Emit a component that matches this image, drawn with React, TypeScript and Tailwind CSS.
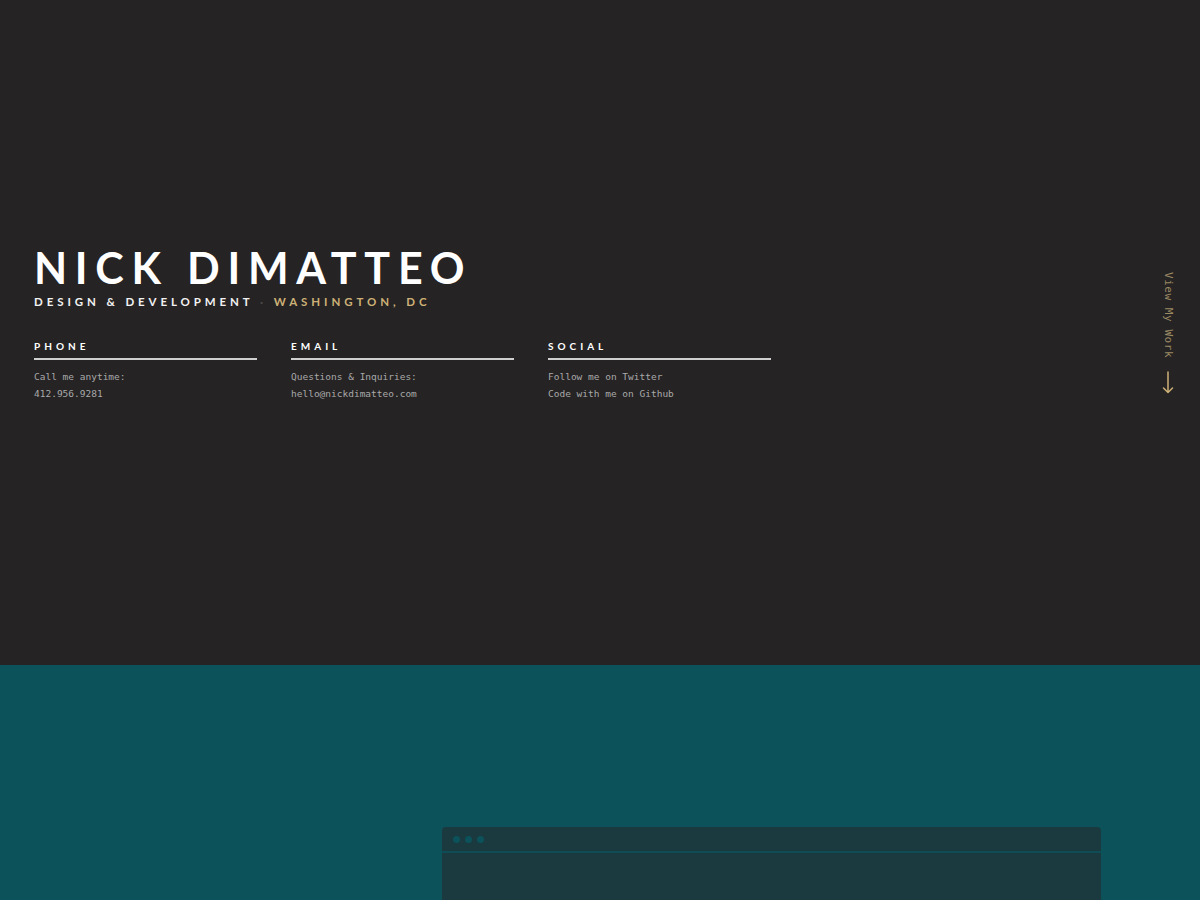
interface ContactColumn {
  title: string
  lines: string[]
}

const columns: ContactColumn[] = [
  { title: 'Phone', lines: ['Call me anytime:', '412.956.9281'] },
  { title: 'Email', lines: ['Questions & Inquiries:', 'hello@nickdimatteo.com'] },
  { title: 'Social', lines: ['Follow me on Twitter', 'Code with me on Github'] },
]

const sans = "font-['Lato','Noto_Sans',sans-serif]"
const mono = "font-['DejaVu_Sans_Mono','Liberation_Mono',monospace]"

export default function App() {
  return (
    <div className="min-h-[900px] bg-[#0b525b]">
      <section className="relative h-[665px] bg-[#252324] px-[34px] pt-[246px]">
        <h1 className={`${sans} text-[43px] font-bold leading-[43px] tracking-[0.18em] text-white`}>
          NICK DIMATTEO
        </h1>
        <p className={`${sans} mt-[4px] text-[11.5px] font-bold tracking-[0.34em] text-[#f2f2f2]`}>
          DESIGN &amp; DEVELOPMENT <span className="text-[#4a4748]">·</span>{' '}
          <span className="text-[#cdb176]">WASHINGTON, DC</span>
        </p>

        <div className="mt-[30px] flex gap-[34px]">
          {columns.map((col: ContactColumn) => (
            <div key={col.title} className="w-[223px]">
              <h3
                className={`${sans} text-[10px] font-bold uppercase leading-[12px] tracking-[0.4em] text-white`}
              >
                {col.title}
              </h3>
              <div className="mt-[6px] h-[2px] bg-[#cfcfcf]" />
              <div className={`${mono} mt-[8px] text-[9.5px] leading-[17px] text-[#a9a9a9]`}>
                {col.lines.map((line: string) => (
                  <div key={line}>{line}</div>
                ))}
              </div>
            </div>
          ))}
        </div>

        <div className="absolute right-[24px] top-[272px] flex flex-col items-center">
          <span className={`${mono} text-[11px] tracking-[0.05em] text-[#9c8a63] [writing-mode:vertical-rl]`}>
            View My Work
          </span>
          <svg className="mt-[13px]" width="12" height="23" viewBox="0 0 12 23" fill="none">
            <path d="M6 1V21.5M1.5 17L6 21.5L10.5 17" stroke="#cdb176" strokeWidth="1.5" strokeLinecap="round" strokeLinejoin="round" />
          </svg>
        </div>
      </section>

      <section className="flex h-[235px] justify-end bg-[#0b525b] pr-[99px] pt-[162px]">
        <div className="w-[659px] overflow-hidden rounded-t-[4px] bg-[#1b3a3f]">
          <div className="flex h-[26px] items-center gap-[5px] border-b-[2px] border-[#0e4d55] pl-[11px]">
            <span className="h-[7px] w-[7px] rounded-full bg-[#0b525b]" />
            <span className="h-[7px] w-[7px] rounded-full bg-[#0b525b]" />
            <span className="h-[7px] w-[7px] rounded-full bg-[#0b525b]" />
          </div>
        </div>
      </section>
    </div>
  )
}
